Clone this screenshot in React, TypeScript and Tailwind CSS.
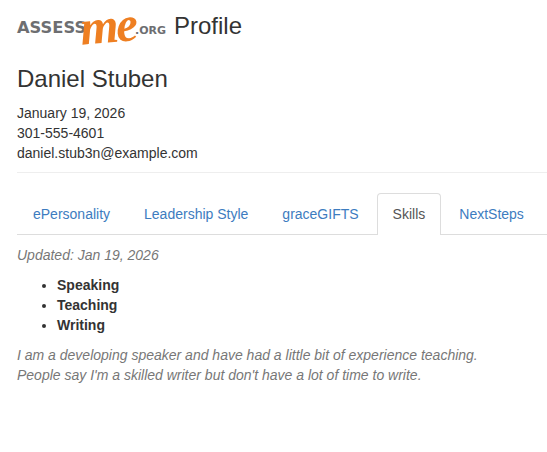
const tabs = ['ePersonality', 'Leadership Style', 'graceGIFTS', 'Skills', 'NextSteps'];

function Logo() {
  return (
    <div className="flex h-[28px] w-[150px] items-center font-['DejaVu_Sans',sans-serif] font-bold leading-none text-[#6d6e71]">
      <span className="mt-[1px] w-[71px] shrink-0 whitespace-nowrap text-[16.3px]">ASSESS</span>
      <span className="ml-[-8px] w-[55px] shrink-0 origin-left whitespace-nowrap font-['Liberation_Serif',serif] text-[38px] italic leading-[44px] tracking-[-2px] text-[#ee7f22] [transform:scale(1.3,1.3)_rotate(-5deg)]">
        me
      </span>
      <span className="mt-[4px] w-[32px] shrink-0 whitespace-nowrap text-[11px]">.ORG</span>
    </div>
  );
}

export default function App() {
  return (
    <div className="h-[452px] w-[547px] overflow-hidden bg-white pl-[17px] font-['Liberation_Sans',sans-serif] text-[14px] leading-[20px] text-[#333]">
      {/* Header */}
      <div className="mt-[14px] flex h-[28px] items-center gap-[7px]">
        <Logo />
        <span className="mb-[4px] text-[24px] leading-[26px] text-[#333]">Profile</span>
      </div>

      <h2 className="mt-[24px] text-[24px] leading-[26px] text-[#333]">Daniel Stuben</h2>

      <div className="mt-[11px]">
        <div>January 19, 2026</div>
        <div>301-555-4601</div>
        <div>daniel.stub3n@example.com</div>
      </div>

      <hr className="mt-[9px] border-t border-[#eee]" />

      {/* Tabs */}
      <ul className="mt-[20px] flex h-[42px] border-b border-[#ddd]">
        {tabs.map((tab) => (
          <li
            key={tab}
            className={
              tab === 'Skills'
                ? 'mr-[2px] h-[42px] rounded-t-[4px] border border-b-0 border-[#ddd] bg-white px-[15px] py-[10px] text-[#555]'
                : 'mr-[2px] h-[41px] border border-transparent px-[15px] py-[10px] text-[#3d7cc0]'
            }
          >
            {tab}
          </li>
        ))}
      </ul>

      {/* Skills */}
      <p className="mt-[10px] italic text-[#777]">Updated: Jan 19, 2026</p>
      <ul className="mt-[10px] list-disc pl-[40px] font-bold">
        <li>Speaking</li>
        <li>Teaching</li>
        <li>Writing</li>
      </ul>
      <p className="mt-[10px] italic text-[#777]">
        I am a developing speaker and have had a little bit of experience teaching.
        <br />
        People say I'm a skilled writer but don't have a lot of time to write.
      </p>
    </div>
  );
}
